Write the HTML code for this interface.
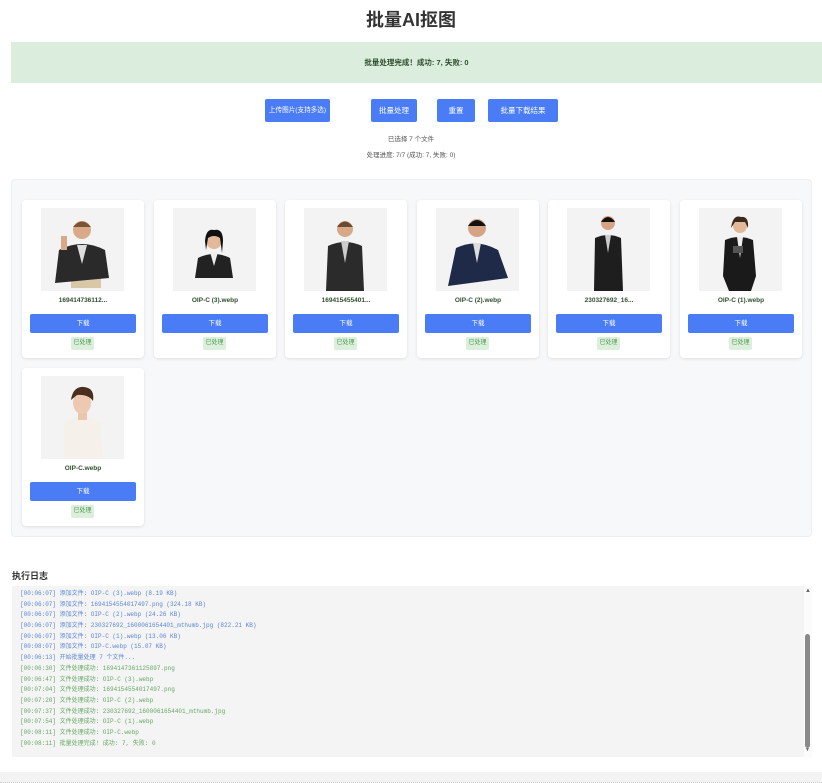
<!DOCTYPE html>
<html><head><meta charset="utf-8">
<style>
*{margin:0;padding:0;box-sizing:border-box}
body{width:822px;height:783px;overflow:hidden;background:#fff;font-family:"Liberation Sans","Noto Sans CJK SC",sans-serif;position:relative;color:#333}
.abs{position:absolute}
h1{position:absolute;left:0;width:822px;top:8px;text-align:center;font-size:18px;font-weight:bold;color:#333;line-height:24px}
.banner{left:11px;top:42px;width:811px;height:41px;background:#dbeddc;color:#2f4f2f;font-size:7.5px;font-weight:bold;text-align:center;line-height:41px}
.btn{background:#4a7cf5;color:#fff;font-size:7.5px;text-align:center;line-height:23px;height:23px;border-radius:2px;white-space:nowrap;overflow:hidden}
.info{left:0;width:822px;text-align:center;font-size:6.5px;color:#555}
.wrap{left:11px;top:179px;width:801px;height:358px;background:#f7f8fa;border:1px solid #eceef0;border-radius:4px}
.card{width:122px;height:158px;background:#fff;border-radius:4px;box-shadow:0 1px 3px rgba(0,0,0,.1)}
.card .img{position:absolute;left:19px;top:8px;width:83px;height:83px;background:#f3f3f3}
.card .nm{position:absolute;left:0;width:122px;top:97px;text-align:center;font-size:6.5px;font-weight:bold;color:#2f4f2f}
.card .dl{position:absolute;left:8px;top:114px;width:106px;height:19px;background:#4a7cf5;border-radius:2px;color:#fff;font-size:6.5px;text-align:center;line-height:19px}
.card .tg{position:absolute;left:49px;top:137px;width:23px;height:13px;background:#dcefdc;border-radius:2px;color:#4c9a4c;font-size:6px;text-align:center;line-height:13px}
.logt{left:12px;top:569px;font-size:9px;font-weight:bold;color:#333}
.log{left:12px;top:586px;width:792px;height:171px;background:#f4f4f4;font-family:"Liberation Mono","Noto Sans CJK SC",monospace;font-size:6px;padding:3px 0 0 8px}
.log div{height:10.7px;line-height:10.7px;white-space:nowrap}
.b{color:#5a86d8}.g{color:#66a966}
.sb{left:804px;top:586px;width:8px;height:171px;background:#fbfbfb}
</style></head><body>
<h1>批量AI抠图</h1>
<div class="abs banner">批量处理完成！成功: 7, 失败: 0</div>
<div class="abs btn" style="left:265px;top:99px;width:65px;font-size:6.6px">上传图片(支持多选)</div>
<div class="abs btn" style="left:371px;top:99px;width:46px">批量处理</div>
<div class="abs btn" style="left:437px;top:99px;width:38px">重置</div>
<div class="abs btn" style="left:488px;top:99px;width:70px">批量下载结果</div>
<div class="abs info" style="top:133px">已选择 7 个文件</div>
<div class="abs info" style="top:149px">处理进度: 7/7 (成功: 7, 失败: 0)</div>
<div class="abs wrap"></div>

<div class="abs card" style="left:22px;top:200px"><div class="img"><svg width="83" height="83"><rect x="30" y="70" width="30" height="10" fill="#d8c8a8"/><path d="M14 75 L18 42 Q41 30 64 42 L68 70 L14 75Z" fill="#2a2a2a"/><path d="M36 37 L41 56 L46 37Z" fill="#ddd"/><rect x="20" y="28" width="6" height="14" fill="#d9a98a"/><circle cx="41" cy="22" r="9" fill="#d9a98a"/><path d="M32 19 Q41 8 50 19Z" fill="#7a5234"/></svg></div><div class="nm">169414736112...</div><div class="dl">下载</div><div class="tg">已处理</div></div>
<div class="abs card" style="left:154px;top:200px"><div class="img"><svg width="83" height="83"><path d="M22 70 L25 50 Q41 42 57 50 L60 70Z" fill="#222"/><path d="M37 44 L41 58 L45 44Z" fill="#eee"/><circle cx="41" cy="33" r="8" fill="#e3b999"/><path d="M32 33 Q33 20 41 22 Q50 20 50 33 L49 45 L47 30 Q41 26 35 30 L33 42Z" fill="#111"/></svg></div><div class="nm">OIP-C (3).webp</div><div class="dl">下载</div><div class="tg">已处理</div></div>
<div class="abs card" style="left:285px;top:200px"><div class="img"><svg width="83" height="83"><path d="M22 83 L24 38 Q41 30 58 38 L60 83Z" fill="#2b2b2b"/><path d="M37 33 L41 55 L45 33Z" fill="#ccc"/><circle cx="41" cy="21" r="8" fill="#d8a888"/><path d="M33 19 Q41 8 49 19Z" fill="#6a4a30"/></svg></div><div class="nm">169415455401...</div><div class="dl">下载</div><div class="tg">已处理</div></div>
<div class="abs card" style="left:417px;top:200px"><div class="img"><svg width="83" height="83"><path d="M12 78 L20 40 Q41 30 62 42 L72 70 L12 78Z" fill="#1e2a48"/><path d="M37 35 L41 55 L45 35Z" fill="#ddd"/><circle cx="41" cy="20" r="9" fill="#d6a384"/><path d="M32 18 Q41 6 50 18Z" fill="#111"/></svg></div><div class="nm">OIP-C (2).webp</div><div class="dl">下载</div><div class="tg">已处理</div></div>
<div class="abs card" style="left:548px;top:200px"><div class="img"><svg width="83" height="83"><path d="M27 83 L28 30 Q41 24 54 30 L56 83Z" fill="#1e1e1e"/><path d="M38 27 L41 45 L44 27Z" fill="#ccc"/><circle cx="41" cy="15" r="7" fill="#d6a384"/><path d="M34 14 Q41 4 48 14Z" fill="#111"/></svg></div><div class="nm">230327692_16...</div><div class="dl">下载</div><div class="tg">已处理</div></div>
<div class="abs card" style="left:680px;top:200px"><div class="img"><svg width="83" height="83"><path d="M24 68 L26 32 Q40 26 54 32 L57 68 L52 83 L30 83Z" fill="#1a1a1a"/><path d="M38 29 L41 50 L44 29Z" fill="#eee"/><circle cx="41" cy="18" r="7" fill="#e2b899"/><path d="M32 20 Q34 6 42 9 Q50 8 49 20 L46 14 L36 14Z" fill="#3a2a1e"/><rect x="34" y="38" width="10" height="7" fill="#555"/></svg></div><div class="nm">OIP-C (1).webp</div><div class="dl">下载</div><div class="tg">已处理</div></div>
<div class="abs card" style="left:22px;top:368px"><div class="img"><svg width="83" height="83"><path d="M22 83 L24 46 Q41 38 60 46 L62 83Z" fill="#f6f0ea"/><rect x="37" y="34" width="9" height="10" fill="#e9c6ad"/><ellipse cx="41" cy="27" rx="9" ry="11" fill="#ecc9b0"/><path d="M30 24 Q32 10 43 11 Q54 12 52 25 Q47 18 36 19Z" fill="#4a2e1e"/></svg></div><div class="nm">OIP-C.webp</div><div class="dl">下载</div><div class="tg">已处理</div></div>

<div class="abs logt">执行日志</div>
<div class="abs log">
<div class="b">[00:06:07] 添加文件: OIP-C (3).webp (8.19 KB)</div>
<div class="b">[00:06:07] 添加文件: 1694154554017497.png (324.18 KB)</div>
<div class="b">[00:06:07] 添加文件: OIP-C (2).webp (24.26 KB)</div>
<div class="b">[00:06:07] 添加文件: 230327692_1600061654401_mthumb.jpg (822.21 KB)</div>
<div class="b">[00:06:07] 添加文件: OIP-C (1).webp (13.06 KB)</div>
<div class="b">[00:08:07] 添加文件: OIP-C.webp (15.07 KB)</div>
<div class="b">[00:06:13] 开始批量处理 7 个文件...</div>
<div class="g">[00:06:30] 文件处理成功: 1694147361125897.png</div>
<div class="g">[00:06:47] 文件处理成功: OIP-C (3).webp</div>
<div class="g">[00:07:04] 文件处理成功: 1694154554017497.png</div>
<div class="g">[00:07:20] 文件处理成功: OIP-C (2).webp</div>
<div class="g">[00:07:37] 文件处理成功: 230327692_1600061654401_mthumb.jpg</div>
<div class="g">[00:07:54] 文件处理成功: OIP-C (1).webp</div>
<div class="g">[00:08:11] 文件处理成功: OIP-C.webp</div>
<div class="g">[00:08:11] 批量处理完成! 成功: 7, 失败: 0</div>
</div>
<div class="abs sb"><div class="abs" style="left:1px;top:48px;width:5px;height:114px;background:#8a8a8a;border-radius:3px"></div><div class="abs" style="left:1px;top:2px;font-size:6px;color:#666">▲</div><div class="abs" style="left:1px;top:161px;font-size:5px;color:#666">▼</div></div>
<div class="abs" style="left:0;top:772px;width:822px;height:11px;background:#f3f3f3;border-bottom:1px dotted #ccc"></div>
</body></html>
